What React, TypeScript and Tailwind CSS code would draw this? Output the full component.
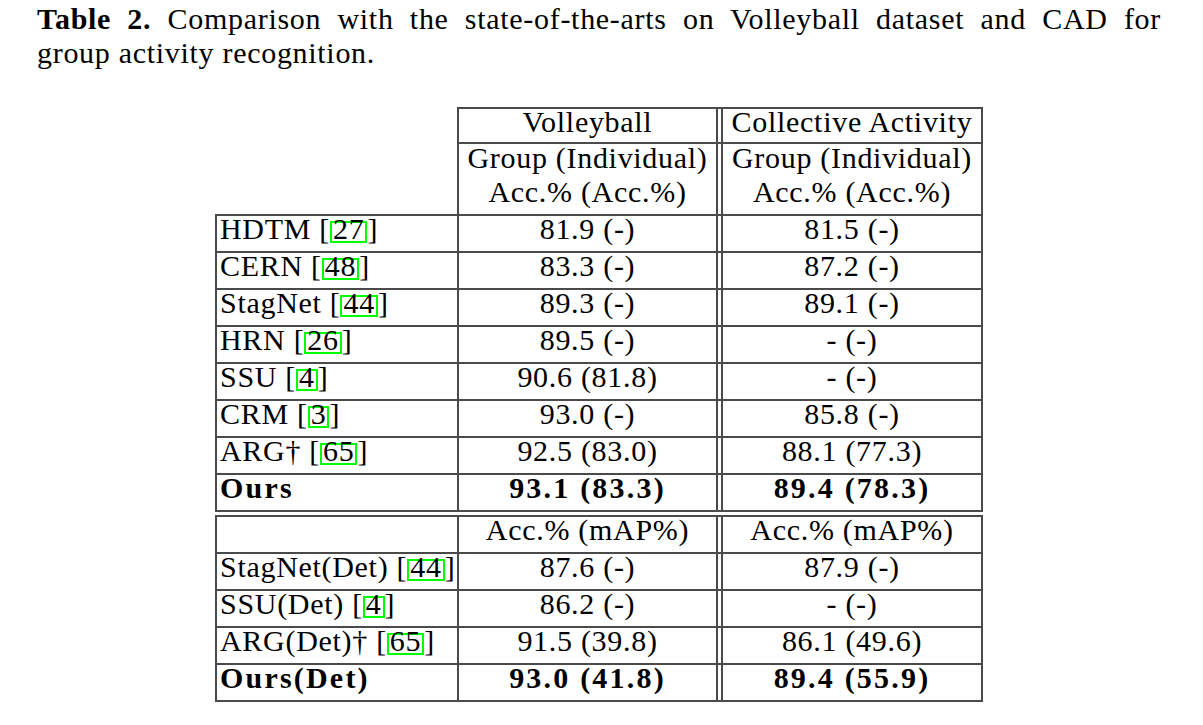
import React from "react";

function Cite({ n }: { n: string }) {
  return (
    <>
      [
      <span className="inline-block border-2 border-[#00ff00] leading-[12px] pb-[6px] px-[1px]">{n}</span>]
    </>
  );
}

type Row = { name: React.ReactNode; v: string; c: string; bold?: boolean };

const top: Row[] = [
  { name: <>HDTM <Cite n="27" /></>, v: "81.9 (-)", c: "81.5 (-)" },
  { name: <>CERN <Cite n="48" /></>, v: "83.3 (-)", c: "87.2 (-)" },
  { name: <>StagNet <Cite n="44" /></>, v: "89.3 (-)", c: "89.1 (-)" },
  { name: <>HRN <Cite n="26" /></>, v: "89.5 (-)", c: "- (-)" },
  { name: <>SSU <Cite n="4" /></>, v: "90.6 (81.8)", c: "- (-)" },
  { name: <>CRM <Cite n="3" /></>, v: "93.0 (-)", c: "85.8 (-)" },
  { name: <>ARG† <Cite n="65" /></>, v: "92.5 (83.0)", c: "88.1 (77.3)" },
  { name: "Ours", v: "93.1 (83.3)", c: "89.4 (78.3)", bold: true },
];

const bottom: Row[] = [
  { name: <>StagNet(Det) <Cite n="44" /></>, v: "87.6 (-)", c: "87.9 (-)" },
  { name: <>SSU(Det) <Cite n="4" /></>, v: "86.2 (-)", c: "- (-)" },
  { name: <>ARG(Det)† <Cite n="65" /></>, v: "91.5 (39.8)", c: "86.1 (49.6)" },
  { name: "Ours(Det)", v: "93.0 (41.8)", c: "89.4 (55.9)", bold: true },
];

function DataRow({ r, last }: { r: Row; last?: boolean }) {
  const b = last ? "border-b-2" : "";
  const h = last ? "h-[39px]" : "h-[37px]";
  const w = r.bold ? "font-bold tracking-[2.2px]" : "";
  return (
    <div className={`flex ${h} leading-[26px]`}>
      <div className={`w-[242px] border-l-2 border-t-2 ${b} border-[#4a4a4a] pl-[3px] whitespace-nowrap ${w}`}>
        {r.name}
      </div>
      <div className={`w-[259px] border-l-2 border-t-2 ${b} border-[#4a4a4a] text-center whitespace-nowrap ${w}`}>{r.v}</div>
      <div className={`w-[5px] border-l-2 border-t-2 ${b} border-[#4a4a4a]`} />
      <div className={`w-[262px] border-l-2 border-r-2 border-t-2 ${b} border-[#4a4a4a] text-center whitespace-nowrap ${w}`}>{r.c}</div>
    </div>
  );
}

export default function App() {
  return (
    <div className="w-[1203px] h-[725px] overflow-hidden bg-white text-black font-serif text-[30px] tracking-[0.7px]">
      <div className="font-[Liberation_Serif,serif]">
        <div className="pl-[37px] w-[1161px] pt-[2px] leading-[34px]">
          <div className="[text-align-last:justify]">
            <b>Table 2.</b> Comparison with the state-of-the-arts on Volleyball dataset and CAD for
          </div>
          <div>group activity recognition.</div>
        </div>

        <div className="ml-[215px] mt-[37px] w-[768px]">
          <div className="flex h-[35px] leading-[26px]">
            <div className="w-[242px]" />
            <div className="w-[259px] border-l-2 border-t-2 border-[#4a4a4a] text-center">Volleyball</div>
            <div className="w-[5px] border-l-2 border-t-2 border-[#4a4a4a]" />
            <div className="w-[262px] border-l-2 border-r-2 border-t-2 border-[#4a4a4a] text-center">Collective Activity</div>
          </div>
          <div className="flex h-[72px] leading-[34px]">
            <div className="w-[242px]" />
            <div className="w-[259px] border-l-2 border-t-2 border-[#4a4a4a] text-center whitespace-nowrap">
              <div className="-mt-[3px]">Group (Individual)</div>
              <div>Acc.% (Acc.%)</div>
            </div>
            <div className="w-[5px] border-l-2 border-t-2 border-[#4a4a4a]" />
            <div className="w-[262px] border-l-2 border-r-2 border-t-2 border-[#4a4a4a] text-center whitespace-nowrap">
              <div className="-mt-[3px]">Group (Individual)</div>
              <div>Acc.% (Acc.%)</div>
            </div>
          </div>
          {top.map((r, i) => (
            <DataRow key={i} r={r} last={i === top.length - 1} />
          ))}

          <div className="mt-[3px]">
            <div className="flex h-[37px] leading-[26px]">
              <div className="w-[242px] border-l-2 border-t-2 border-[#4a4a4a]" />
              <div className="w-[259px] border-l-2 border-t-2 border-[#4a4a4a] text-center whitespace-nowrap">Acc.% (mAP%)</div>
              <div className="w-[5px] border-l-2 border-t-2 border-[#4a4a4a]" />
              <div className="w-[262px] border-l-2 border-r-2 border-t-2 border-[#4a4a4a] text-center whitespace-nowrap">Acc.% (mAP%)</div>
            </div>
            {bottom.map((r, i) => (
              <DataRow key={i} r={r} last={i === bottom.length - 1} />
            ))}
          </div>
        </div>
      </div>
    </div>
  );
}
